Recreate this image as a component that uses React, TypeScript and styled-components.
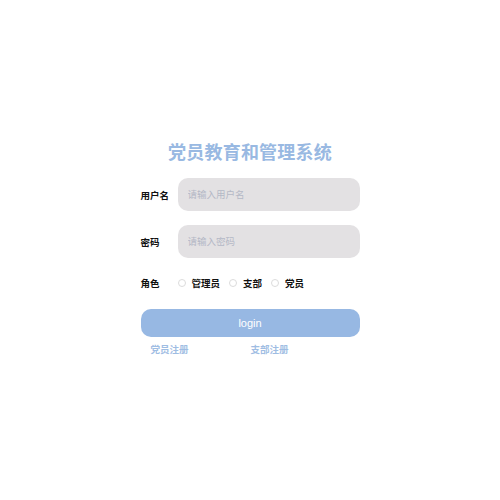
import React from 'react'
import styled, { createGlobalStyle } from 'styled-components'

const GlobalStyle = createGlobalStyle`
    body {
        margin: 0;
        background: #ffffff;
        font-family: "Liberation Serif", "Noto Sans CJK SC", serif;
    }
`;

const Page = styled.div`
    display: flex;
    justify-content: center;
    padding-top: 142px;
`;

const Box = styled.div`
    width: 219px;
    display: flex;
    flex-direction: column;
`;

const Title = styled.h1`
    margin: 0 0 14px;
    text-align: center;
    font-size: 18px;
    line-height: 22px;
    font-weight: bold;
    color: #99b9e2;
    letter-spacing: 0.2px;
`;

const Row = styled.div`
    display: flex;
    align-items: center;
    margin-bottom: 14px;
`;

const Label = styled.label`
    width: 37px;
    flex-shrink: 0;
    font-size: 9.5px;
    font-weight: bold;
    color: #111;
`;

const Input = styled.input`
    width: 182px;
    height: 33px;
    box-sizing: border-box;
    border: none;
    outline: none;
    border-radius: 10px;
    background: #e3e1e3;
    padding: 0 10px;
    font-size: 9.5px;
    font-family: inherit;
    &::placeholder {
        color: #b4b8c6;
    }
`;

const RoleRow = styled.div`
    display: flex;
    align-items: center;
    height: 24px;
    margin-top: -1px;
`;

const Option = styled.label`
    display: flex;
    align-items: center;
    margin-right: 9px;
    font-size: 9.5px;
    font-weight: bold;
    color: #111;
`;

const Radio = styled.span`
    width: 8px;
    height: 8px;
    border-radius: 50%;
    border: 1px solid #dcdcdc;
    margin: 0 6px 0 0;
    box-sizing: border-box;
`;

const Button = styled.button`
    margin-top: 14px;
    height: 28px;
    border: none;
    border-radius: 10px;
    background: #97b8e3;
    color: #fff;
    font-family: "Liberation Sans", "Noto Sans", sans-serif;
    font-size: 11px;
`;

const Links = styled.div`
    display: flex;
    padding-left: 10px;
    margin-top: 5px;
`;

const Link = styled.a`
    width: 100px;
    font-size: 9.5px;
    font-weight: bold;
    color: #9fbde3;
    text-decoration: none;
`;

const App: React.FC = () => {
    const roles = ['管理员', '支部', '党员'];
    return (
        <Page>
            <GlobalStyle />
            <Box>
                <Title>党员教育和管理系统</Title>
                <Row>
                    <Label>用户名</Label>
                    <Input placeholder="请输入用户名" />
                </Row>
                <Row>
                    <Label>密码</Label>
                    <Input type="password" placeholder="请输入密码" />
                </Row>
                <RoleRow>
                    <Label>角色</Label>
                    {roles.map((r) => (
                        <Option key={r}>
                            <Radio />
                            {r}
                        </Option>
                    ))}
                </RoleRow>
                <Button>login</Button>
                <Links>
                    <Link href="#">党员注册</Link>
                    <Link href="#">支部注册</Link>
                </Links>
            </Box>
        </Page>
    );
};

export default App;
